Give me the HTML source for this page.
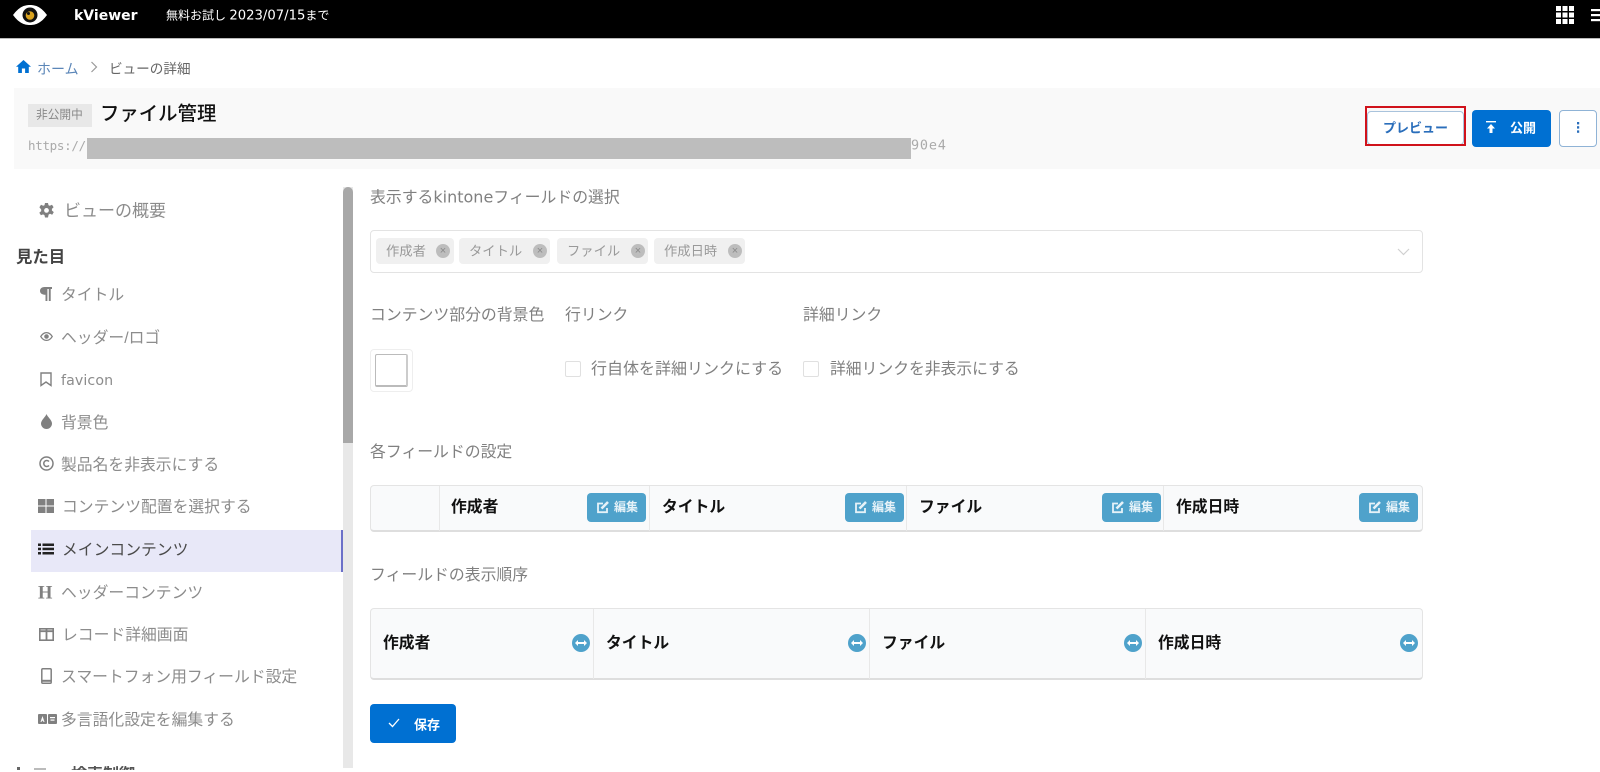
<!DOCTYPE html>
<html lang="ja"><head><meta charset="utf-8"><title>kViewer</title>
<style>
html,body{margin:0;padding:0;background:#fff;width:1600px;height:772px;overflow:hidden}
body{position:relative;font-family:"Liberation Sans","Noto Sans CJK JP",sans-serif;color:#777}
.a,.t{position:absolute}
.t{white-space:nowrap;transform:translateY(calc(-50% + 1.500px));line-height:1.2}
.t.s{transform:translateY(calc(-50% + 2.500px))}
.s{font-size:15.800px;color:#8c8c8c}
.m{font-size:15.850px;color:#808080}
.b{font-size:15.800px;font-weight:700;color:#111}
.ic{position:absolute;fill:#808080}
.chip{position:absolute;top:238px;height:26px;background:#f0f0f0;border-radius:4px}
.x{position:absolute;width:14px;height:14px;border-radius:50%;background:#bdbdbd;top:6px;color:#8a8a8a;font-size:11px;line-height:14px;text-align:center}
.ed{position:absolute;top:493px;width:59px;height:29px;background:#4fa2cb;border-radius:4px}
.ed span{position:absolute;left:27px;top:6px;font-size:12px;line-height:16px;font-weight:700;color:#e6f2f8}
.ed svg{position:absolute;left:9px;top:7px}
.ar{position:absolute;top:634px;width:18px;height:18px}
.div{position:absolute;width:1px;background:#e8e8e8}
.tb{position:absolute;left:370px;width:1053px;background:#f9fafb;border:1px solid #e4e4e4;border-bottom:2px solid #dedede;border-radius:4px;box-sizing:border-box}
.dj{font-family:"DejaVu Sans",sans-serif}
</style></head><body>

<div class="a" style="left:0;top:0;width:1600px;height:38px;background:#000;border-bottom:1px solid #bbb;box-sizing:content-box"></div>
<svg class="a" style="left:12px;top:4px" width="36" height="22" viewBox="0 0 36 22"><path d="M1 11C7 3 12 1 18 1s11 2 17 10c-6 8-11 10-17 10S7 19 1 11z" fill="#fff"/><circle cx="18" cy="11" r="7.500" fill="#111"/><circle cx="18" cy="11.500" r="4.300" fill="#d9a21f"/><circle cx="16.500" cy="9.500" r="1.500" fill="#111"/></svg>
<div class="t dj" style="left:74px;top:15px;font-weight:700;color:#fff;font-size:14px">kViewer</div>
<div class="t" style="left:166px;top:15px;font-size:12px;color:#fff">無料お試し <span class="dj" style="font-size:13.200px">2023/07/15</span>まで</div>
<svg class="a" style="left:1556px;top:6px" width="18" height="18" fill="#fff"><rect width="5" height="5"/><rect x="6.500" width="5" height="5"/><rect x="13" width="5" height="5"/><rect y="6.500" width="5" height="5"/><rect x="6.500" y="6.500" width="5" height="5"/><rect x="13" y="6.500" width="5" height="5"/><rect y="13" width="5" height="5"/><rect x="6.500" y="13" width="5" height="5"/><rect x="13" y="13" width="5" height="5"/></svg>
<svg class="a" style="left:1591px;top:9px" width="9" height="13" fill="#fff"><rect width="9" height="2.200"/><rect y="5" width="9" height="2.200"/><rect y="10" width="9" height="2.200"/></svg>

<svg class="a" style="left:16px;top:60px" width="15" height="13" viewBox="0 0 15 13" fill="#0070d2"><path d="M7.500 0L0 6.800h2.200V13h3.700V8.500h3.200V13h3.700V6.800H15z"/></svg>
<div class="t" style="left:37px;top:68px;font-size:14px;color:#5b86b8">ホーム</div>
<svg class="a" style="left:90px;top:61px" width="8" height="12" fill="none" stroke="#999" stroke-width="1.200"><path d="M1.500 1l5 5-5 5"/></svg>
<div class="t" style="left:109px;top:68px;font-size:13.600px;color:#666">ビューの詳細</div>

<div class="a" style="left:14px;top:88px;width:1586px;height:81px;background:#f9f9f9"></div>
<div class="a" style="left:28px;top:104px;width:64px;height:23px;background:#e8e8e8"></div>
<div class="t" style="left:36px;top:114px;font-size:11.700px;color:#888">非公開中</div>
<div class="t" style="left:100px;top:113px;font-size:19.400px;color:#111;font-weight:500">ファイル管理</div>
<div class="t" style="left:28px;top:144px;font-size:12.500px;color:#aaa;font-family:'DejaVu Sans Mono','Liberation Mono',monospace;letter-spacing:-.3px">https://</div>
<div class="a" style="left:87px;top:138px;width:824px;height:21px;background:#bdbdbd"></div>
<div class="t" style="left:911px;top:144px;font-size:13.500px;color:#aaa;font-family:'DejaVu Sans Mono','Liberation Mono',monospace;letter-spacing:.8px">90e4</div>

<div class="a" style="left:1367px;top:111px;width:97px;height:34px;background:#fff;border:1px solid #a9c3dc;border-radius:4px;box-sizing:border-box"></div>
<div class="a" style="left:1365px;top:106px;width:101px;height:40px;border:2px solid #d0121b;box-sizing:border-box"></div>
<div class="t" style="left:1383px;top:127px;font-size:13px;font-weight:700;color:#2a6ebb">プレビュー</div>
<div class="a" style="left:1472px;top:110px;width:79px;height:37px;background:#0070d2;border-radius:4px"></div>
<svg class="a" style="left:1486px;top:121px" width="10" height="12" fill="#fff"><rect width="10" height="1.400"/><path d="M5 3L1 7.500h2.500V12h3V7.500H9z"/></svg>
<div class="t" style="left:1510px;top:127px;font-size:13px;font-weight:700;color:#fff">公開</div>
<div class="a" style="left:1559px;top:110px;width:38px;height:37px;background:#fff;border:1px solid #8fb3d6;border-radius:4px;box-sizing:border-box"></div>
<svg class="a" style="left:1576px;top:122px" width="4" height="11" fill="#2a6ebb"><rect x="1" width="2.200" height="2.400"/><rect x="1" y="4.200" width="2.200" height="2.400"/><rect x="1" y="8.400" width="2.200" height="2.400"/></svg>

<!-- sidebar -->
<div class="a" style="left:343px;top:187px;width:10px;height:581px;background:#e8e8e8"></div>
<div class="a" style="left:343px;top:187px;width:10px;height:256px;background:#a8a8a8;border-radius:5px 5px 0 0"></div>
<div class="a" style="left:31px;top:530px;width:312px;height:42px;background:#e8e8f8"></div>
<div class="a" style="left:341px;top:530px;width:2px;height:42px;background:#6b70c8"></div>

<svg class="ic" style="left:39px;top:203px" width="15" height="16" viewBox="0 0 15 16"><path fill-rule="evenodd" d="M6 0h3l.5 2.200 1.300.6L13 1.700l1.600 2.600-1.700 1.600v1.600l1.900 1.600-1.600 2.600-2.200-.9-1.400.8L9 14.500H6l-.5-2.300-1.400-.8-2.200.9L.3 9.700l1.900-1.600V6.500L.4 4.300 2 1.700l2.200 1.100 1.300-.6zM7.500 5a2.400 2.400 0 100 4.800 2.400 2.400 0 000-4.800z"/></svg>
<div class="t s" style="left:64px;top:209px;font-size:17px">ビューの概要</div>
<div class="t" style="left:16px;top:257px;font-size:16.400px;font-weight:700;color:#444">見た目</div>

<svg class="ic" style="left:40px;top:287px" width="12" height="14" viewBox="0 0 12 14"><path d="M4.500 0H12v2h-1.300v12H8.800V2H7.400v12H5.500V7.800C2 7.800 0 6.200 0 3.900 0 1.500 2 0 4.500 0z"/></svg>
<div class="t s" style="left:61px;top:294px">タイトル</div>
<svg class="ic" style="left:40px;top:332px" width="13" height="9" viewBox="0 0 13 9"><path fill-rule="evenodd" d="M0 4.500C1.800 1.500 4 0 6.500 0S11.200 1.500 13 4.500C11.200 7.500 9 9 6.500 9S1.800 7.500 0 4.500zm1.500 0C3 6.700 4.600 7.800 6.500 7.800S10 6.700 11.500 4.500C10 2.300 8.400 1.200 6.500 1.200S3 2.300 1.500 4.500zm5-2.300a2.300 2.300 0 110 4.600 2.300 2.300 0 010-4.600z"/></svg>
<div class="t s" style="left:61px;top:337px">ヘッダー/ロゴ</div>
<svg class="a" style="left:40px;top:372px" width="12" height="15" fill="none" stroke="#808080" stroke-width="1.400"><path d="M1 1h10v12.500L6 10l-5 3.500z"/></svg>
<div class="t s dj" style="left:61px;top:379px;font-size:14.200px;letter-spacing:.1px">favicon</div>
<svg class="ic" style="left:41px;top:414px" width="11" height="15" viewBox="0 0 11 15"><path d="M5.500 0c1 3 5.500 6 5.500 9.500a5.500 5.500 0 01-11 0C0 6 4.500 3 5.500 0z"/></svg>
<div class="t s" style="left:61px;top:422px">背景色</div>
<svg class="a" style="left:39px;top:456px" width="15" height="15" fill="none" stroke="#808080" stroke-width="1.500"><circle cx="7.500" cy="7.500" r="6.500"/><path d="M10 5.500a3 3 0 100 4"/></svg>
<div class="t s" style="left:61px;top:464px">製品名を非表示にする</div>
<svg class="ic" style="left:38px;top:499px" width="16" height="14"><rect width="7.500" height="6.500"/><rect x="8.500" width="7.500" height="6.500"/><rect y="7.500" width="7.500" height="6.500"/><rect x="8.500" y="7.500" width="7.500" height="6.500"/></svg>
<div class="t s" style="left:62px;top:506px">コンテンツ配置を選択する</div>
<svg class="a" style="left:38px;top:543px" width="16" height="12" fill="#222"><rect y=".5" width="3" height="2.500"/><rect x="4.500" y=".5" width="11.500" height="2.500"/><rect y="4.700" width="3" height="2.500"/><rect x="4.500" y="4.700" width="11.500" height="2.500"/><rect y="9" width="3" height="2.500"/><rect x="4.500" y="9" width="11.500" height="2.500"/></svg>
<div class="t s" style="left:62px;top:549px;color:#4a4a4a">メインコンテンツ</div>
<div class="t" style="left:38px;top:592px;font-family:'Liberation Serif',serif;font-weight:700;font-size:18.500px;color:#808080">H</div>
<div class="t s" style="left:61px;top:592px">ヘッダーコンテンツ</div>
<svg class="a" style="left:39px;top:628px" width="15" height="13" fill="none" stroke="#808080" stroke-width="1.600"><rect x=".8" y=".8" width="13.400" height="11.400"/><path d="M7.500 1v11M1 3.200h13" stroke-width="1.800"/></svg>
<div class="t s" style="left:62px;top:634px">レコード詳細画面</div>
<svg class="a" style="left:41px;top:668px" width="11" height="16" fill="none" stroke="#808080" stroke-width="1.500"><rect x=".8" y=".8" width="9.400" height="14.400" rx="1"/><path d="M1 12.800h9" stroke-width="2"/></svg>
<div class="t s" style="left:61px;top:676px">スマートフォン用フィールド設定</div>
<svg class="ic" style="left:38px;top:714px" width="19" height="10"><rect width="9" height="10" rx="1"/><rect x="10" width="9" height="10" rx="1"/><path d="M4.500 2L2.500 8h1l.4-1.200h1.200L5.500 8h1z" fill="#fff"/><rect x="12" y="3" width="5" height="1.200" fill="#fff"/><rect x="12.500" y="5.500" width="4" height="1.200" fill="#fff"/></svg>
<div class="t s" style="left:61px;top:719px">多言語化設定を編集する</div>

<div class="a" style="left:0;top:766px;width:343px;height:4px;overflow:hidden">
<div class="a" style="left:17px;top:1px;width:3px;height:3px;background:#666"></div>
<div class="a" style="left:34px;top:2px;width:12px;height:2px;background:#bbb"></div>
<div class="t" style="left:71px;top:9px;font-size:16px;font-weight:700;color:#555;transform:translateY(-50%)">検索制御</div>
</div>

<!-- main -->
<div class="t m" style="left:370px;top:196px">表示する<span class="dj" style="font-size:16px">kintone</span>フィールドの選択</div>
<div class="a" style="left:370px;top:230px;width:1053px;height:43px;border:1px solid #e3e3e3;border-radius:4px;box-sizing:border-box"></div>
<div class="chip" style="left:376px;width:78px"><div class="t" style="left:10px;top:12px;font-size:13.300px;color:#999">作成者</div><div class="x" style="left:60px">×</div></div>
<div class="chip" style="left:459px;width:91px"><div class="t" style="left:10px;top:12px;font-size:13.300px;color:#999">タイトル</div><div class="x" style="left:74px">×</div></div>
<div class="chip" style="left:557px;width:91px"><div class="t" style="left:10px;top:12px;font-size:13.300px;color:#999">ファイル</div><div class="x" style="left:74px">×</div></div>
<div class="chip" style="left:654px;width:91px"><div class="t" style="left:10px;top:12px;font-size:13.300px;color:#999">作成日時</div><div class="x" style="left:74px">×</div></div>
<svg class="a" style="left:1397px;top:248px" width="13" height="8" fill="none" stroke="#d0d0d0" stroke-width="1.200"><path d="M1 1l5.500 5.500L12 1"/></svg>

<div class="t m" style="left:370px;top:314px">コンテンツ部分の背景色</div>
<div class="t m" style="left:565px;top:314px">行リンク</div>
<div class="t m" style="left:803px;top:314px">詳細リンク</div>
<div class="a" style="left:370px;top:349px;width:43px;height:43px;border:1px solid #eee;border-radius:4px;box-sizing:border-box"></div>
<div class="a" style="left:375px;top:354px;width:33px;height:33px;border:1px solid #bbb;border-bottom:2px solid #bbb;border-right:2px solid #ccc;border-radius:2px;box-sizing:border-box"></div>
<div class="a" style="left:565px;top:361px;width:16px;height:16px;border:1px solid #e0e0e0;border-radius:2px;box-sizing:border-box"></div>
<div class="t m" style="left:591px;top:368px;font-size:16px">行自体を詳細リンクにする</div>
<div class="a" style="left:803px;top:361px;width:16px;height:16px;border:1px solid #e0e0e0;border-radius:2px;box-sizing:border-box"></div>
<div class="t m" style="left:830px;top:369px;font-size:15.800px">詳細リンクを非表示にする</div>

<div class="t m" style="left:370px;top:451px">各フィールドの設定</div>
<div class="tb" style="top:485px;height:47px"></div>
<div class="div" style="left:439px;top:486px;height:45px"></div>
<div class="div" style="left:649px;top:486px;height:45px"></div>
<div class="div" style="left:906px;top:486px;height:45px"></div>
<div class="div" style="left:1163px;top:486px;height:45px"></div>
<div class="t b" style="left:451px;top:507px">作成者</div>
<div class="t b" style="left:662px;top:507px">タイトル</div>
<div class="t b" style="left:919px;top:507px">ファイル</div>
<div class="t b" style="left:1176px;top:507px">作成日時</div>
<div class="ed" style="left:587px"><svg width="14" height="14" fill="none" stroke="#e6f2f8" stroke-width="1.800"><path d="M11 8v4.200H2V3.500h5"/><path d="M5.500 8.500L12 2" stroke-width="2.600"/></svg><span>編集</span></div>
<div class="ed" style="left:845px"><svg width="14" height="14" fill="none" stroke="#e6f2f8" stroke-width="1.800"><path d="M11 8v4.200H2V3.500h5"/><path d="M5.500 8.500L12 2" stroke-width="2.600"/></svg><span>編集</span></div>
<div class="ed" style="left:1102px"><svg width="14" height="14" fill="none" stroke="#e6f2f8" stroke-width="1.800"><path d="M11 8v4.200H2V3.500h5"/><path d="M5.500 8.500L12 2" stroke-width="2.600"/></svg><span>編集</span></div>
<div class="ed" style="left:1359px"><svg width="14" height="14" fill="none" stroke="#e6f2f8" stroke-width="1.800"><path d="M11 8v4.200H2V3.500h5"/><path d="M5.500 8.500L12 2" stroke-width="2.600"/></svg><span>編集</span></div>

<div class="t m" style="left:370px;top:574px">フィールドの表示順序</div>
<div class="tb" style="top:608px;height:72px"></div>
<div class="div" style="left:593px;top:609px;height:70px"></div>
<div class="div" style="left:869px;top:609px;height:70px"></div>
<div class="div" style="left:1145px;top:609px;height:70px"></div>
<div class="t b" style="left:383px;top:643px">作成者</div>
<div class="t b" style="left:606px;top:643px">タイトル</div>
<div class="t b" style="left:882px;top:643px">ファイル</div>
<div class="t b" style="left:1158px;top:643px">作成日時</div>
<svg class="ar" style="left:572px" viewBox="0 0 18 18"><circle cx="9" cy="9" r="9" fill="#4fa2cb"/><path d="M3 9l3-3v2h6V6l3 3-3 3v-2H6v2z" fill="#fff"/></svg>
<svg class="ar" style="left:848px" viewBox="0 0 18 18"><circle cx="9" cy="9" r="9" fill="#4fa2cb"/><path d="M3 9l3-3v2h6V6l3 3-3 3v-2H6v2z" fill="#fff"/></svg>
<svg class="ar" style="left:1124px" viewBox="0 0 18 18"><circle cx="9" cy="9" r="9" fill="#4fa2cb"/><path d="M3 9l3-3v2h6V6l3 3-3 3v-2H6v2z" fill="#fff"/></svg>
<svg class="ar" style="left:1400px" viewBox="0 0 18 18"><circle cx="9" cy="9" r="9" fill="#4fa2cb"/><path d="M3 9l3-3v2h6V6l3 3-3 3v-2H6v2z" fill="#fff"/></svg>

<div class="a" style="left:370px;top:704px;width:86px;height:39px;background:#0070d2;border-radius:4px"></div>
<svg class="a" style="left:388px;top:718px" width="12" height="10" fill="none" stroke="#fff" stroke-width="1.300"><path d="M1 5l3.500 3.500L11 1"/></svg>
<div class="t" style="left:414px;top:723.500px;font-size:13px;font-weight:700;color:#fff">保存</div>
</body></html>
